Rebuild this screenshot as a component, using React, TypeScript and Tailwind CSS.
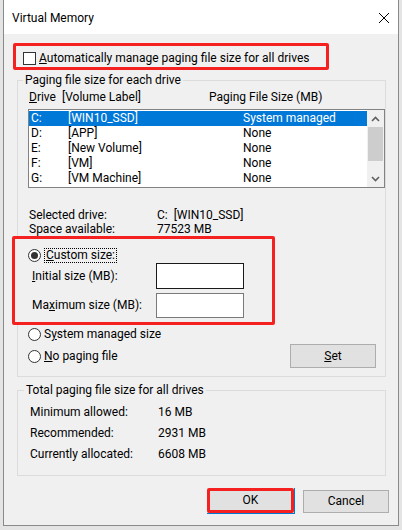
const drives = [
  { drive: "C:", label: "[WIN10_SSD]", size: "System managed" },
  { drive: "D:", label: "[APP]", size: "None" },
  { drive: "E:", label: "[New Volume]", size: "None" },
  { drive: "F:", label: "[VM]", size: "None" },
  { drive: "G:", label: "[VM Machine]", size: "None" },
];

const totals = [
  { label: "Minimum allowed:", value: "16 MB" },
  { label: "Recommended:", value: "2931 MB" },
  { label: "Currently allocated:", value: "6608 MB" },
];

const Radio = ({ checked }: { checked?: boolean }) => (
  <span className="flex h-[13px] w-[13px] shrink-0 items-center justify-center rounded-full border border-[#333333] bg-white">
    {checked && <span className="h-[7px] w-[7px] rounded-full bg-[#333333]"></span>}
  </span>
);

const Chevron = ({ up }: { up?: boolean }) => (
  <svg width="9" height="6" viewBox="0 0 9 6" className="mx-auto">
    <path
      d={up ? "M1 5 L4.5 1.5 L8 5" : "M1 1 L4.5 4.5 L8 1"}
      fill="none"
      stroke="#606060"
      strokeWidth="1.6"
    />
  </svg>
);

export default function App() {
  return (
    <div className="h-[530px] w-[402px] bg-[#e4e4e4] pl-[3px] font-['Segoe_UI',Roboto,sans-serif] text-[12px] leading-[15px] text-black">
      <div className="flex h-[526px] w-[396px] flex-col border-x border-b border-[#8a8a8a] bg-[#f0f0f0]">
        {/* title bar */}
        <div className="flex h-[34px] items-center justify-between bg-white pl-[8px] pr-[9px]">
          <span className="mt-[3px]">Virtual Memory</span>
          <svg width="10" height="10" viewBox="0 0 10 10" className="mt-[2px]">
            <path d="M0 0 L10 10 M10 0 L0 10" stroke="#000" strokeWidth="1" />
          </svg>
        </div>

        {/* automatic option */}
        <div className="ml-[9px] mt-[9px] h-[27px] w-[316px] rounded-[2px] border-[3px] border-[#f52121] pl-[7px] pt-[5px]">
          <div className="flex h-[15px] items-center gap-[3px]">
            <span className="h-[13px] w-[13px] border border-[#333333] bg-white"></span>
            <span>
              <u>A</u>utomatically manage paging file size for all drives
            </span>
          </div>
        </div>

        {/* per-drive group */}
        <fieldset className="ml-[13px] mt-[2px] w-[369px] border border-[#dcdcdc] pb-[8px]">
          <legend className="ml-[5px] px-[2px] leading-[16px]">Paging file size for each drive</legend>

          <div className="ml-[11px] mt-[2px] flex">
            <span className="w-[33px]">
              <u>D</u>rive
            </span>
            <span className="w-[147px]">[Volume Label]</span>
            <span>Paging File Size (MB)</span>
          </div>

          <div className="ml-[10px] mt-[4px] flex h-[79px] w-[357px] border border-[#828282] bg-white">
            <div className="flex-1 pt-[1px]">
              {drives.map((d, i) => (
                <div
                  key={d.drive}
                  className={
                    i === 0
                      ? "flex h-[15px] items-center bg-[#0078d7] pl-[2px] text-white"
                      : "flex h-[15px] items-center pl-[2px]"
                  }
                >
                  <span className="w-[37px]">{d.drive}</span>
                  <span className="w-[175px]">{d.label}</span>
                  <span>{d.size}</span>
                </div>
              ))}
            </div>
            <div className="flex w-[17px] flex-col bg-[#f0f0f0]">
              <div className="flex h-[17px] items-center">
                <Chevron up />
              </div>
              <div className="mx-auto h-[34px] w-[15px] bg-[#cdcdcd]"></div>
              <div className="flex-1"></div>
              <div className="flex h-[17px] items-center">
                <Chevron />
              </div>
            </div>
          </div>

          <div className="ml-[11px] mt-[20px]">
            <div className="flex h-[15px]">
              <span className="w-[128px]">Selected drive:</span>
              <span>C:&nbsp;&nbsp;[WIN10_SSD]</span>
            </div>
            <div className="flex h-[13px] leading-[13px]">
              <span className="w-[128px]">Space available:</span>
              <span>77523 MB</span>
            </div>
          </div>

          {/* custom size */}
          <div className="relative -ml-[6px] h-[89px] w-[263px] rounded-[2px] border-[3px] border-[#f52121] bg-[#f0f0f0] pt-[9px]">
            <div className="ml-[13px] flex h-[15px] items-center">
              <Radio checked />
              <span className="ml-[3px] border border-dotted border-black px-[1px] leading-[13px]">
                <u>C</u>ustom size:
              </span>
            </div>
            <div className="ml-[17px] flex h-[26px] items-center">
              <span className="w-[124px]">
                <u>I</u>nitial size (MB):
              </span>
              <span className="h-[26px] w-[88px] border border-[#1a1a1a] bg-white"></span>
            </div>
            <div className="ml-[17px] mt-[4px] flex h-[25px] items-center">
              <span className="w-[124px]">
                Ma<u>x</u>imum size (MB):
              </span>
              <span className="h-[25px] w-[88px] border border-[#7a7a7a] bg-white"></span>
            </div>
          </div>

          <div className="ml-[10px] mt-[2px] flex h-[15px] items-center gap-[3px]">
            <Radio />
            <span>
              S<u>y</u>stem managed size
            </span>
          </div>
          <div className="ml-[10px] mr-[9px] mt-[2px] flex h-[24px] items-center">
            <Radio />
            <span className="ml-[3px] flex-1">
              <u>N</u>o paging file
            </span>
            <button className="h-[24px] w-[86px] border border-[#adadad] bg-[#e1e1e1]">
              <u>S</u>et
            </button>
          </div>
        </fieldset>

        {/* totals group */}
        <fieldset className="ml-[13px] mt-[5px] w-[369px] border border-[#dcdcdc] pb-[10px]">
          <legend className="ml-[6px] px-[2px] leading-[16px]">Total paging file size for all drives</legend>
          <div className="ml-[12px] mt-[4px]">
            {totals.map((t) => (
              <div key={t.label} className="flex h-[21px] items-center">
                <span className="w-[128px]">{t.label}</span>
                <span>{t.value}</span>
              </div>
            ))}
          </div>
        </fieldset>

        {/* buttons */}
        <div className="mr-[9px] mt-[12px] flex justify-end gap-[8px]">
          <div className="border-b border-r border-[#0078d7]">
            <button className="h-[25px] w-[87px] rounded-[2px] border-[3px] border-[#f52121] bg-[#e1e1e1]">
              OK
            </button>
          </div>
          <button className="mt-[2px] h-[23px] w-[86px] border border-[#adadad] bg-[#e1e1e1]">Cancel</button>
        </div>
      </div>
    </div>
  );
}
